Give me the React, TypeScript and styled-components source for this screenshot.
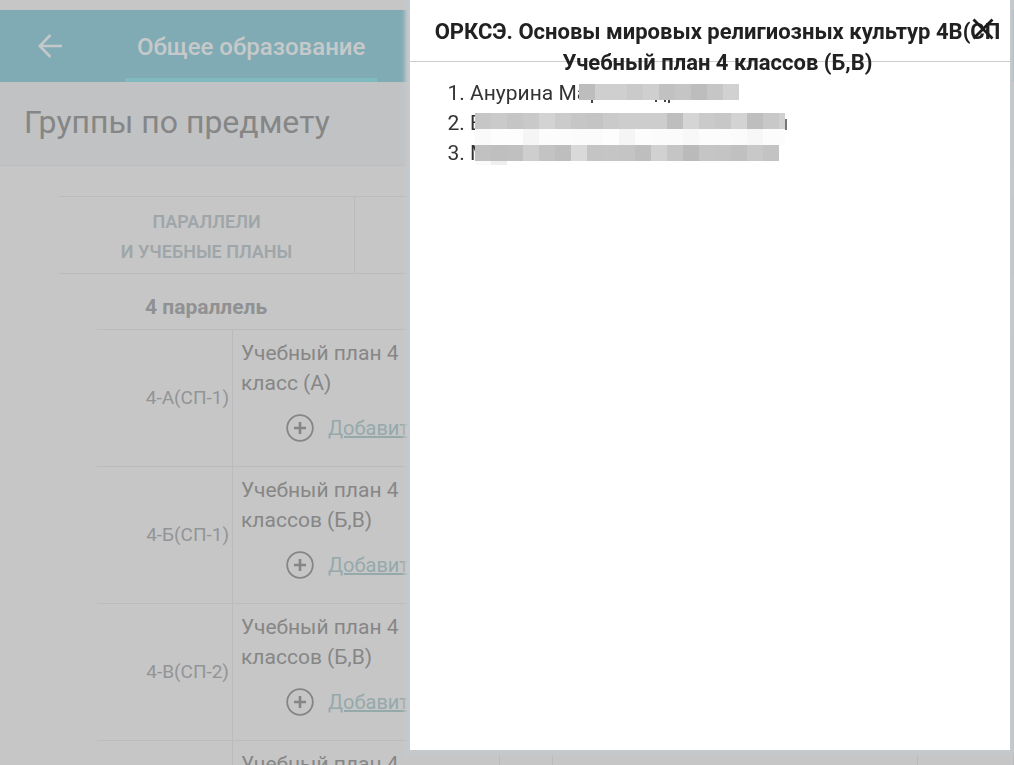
import React from 'react';
import styled, { createGlobalStyle } from 'styled-components';

const GlobalStyle = createGlobalStyle`
  * { box-sizing: border-box; }
  html { height: 100%; background: #c6c6c6; }
  body { margin: 0; height: 100%; overflow: hidden; font: 20px/30px Roboto, "Liberation Sans", sans-serif; color: #868686; }
  #root { height: 100%; overflow: hidden; }
`;

const Page = styled.div`
  padding-top: 10px;
`;

const TopBar = styled.header`
  display: flex;
  height: 72px;
  background: #80abb4;
`;

const BackButton = styled.button`
  display: flex;
  align-items: center;
  justify-content: center;
  width: 100px;
  padding: 0;
  border: 0;
  background: none;
  color: #c3c8c9;
`;

const Tab = styled.a`
  display: flex;
  align-items: center;
  margin-left: 25px;
  padding: 2px 12px 0;
  border-top: 4px solid transparent;
  border-bottom: 4px solid #80bac1;
  color: #c6c9ca;
  font-size: 24px;
  font-weight: 500;
  text-decoration: none;
`;

const Heading = styled.div`
  padding: 20px 24px 23px;
  border-bottom: 1px solid #bbbdbe;
  background: #c1c2c4;
`;

const HeadingText = styled.h1`
  margin: 0;
  color: #868686;
  font-size: 32px;
  line-height: 40px;
  font-weight: 400;
`;

const Groups = styled.table`
  width: calc(100% - 59px);
  margin: 30px 0 0 59px;
  border-collapse: separate;
  border-spacing: 0;
  table-layout: fixed;
`;

const HeadCell = styled.th`
  height: 78px;
  padding: 4px 0 0;
  border: 1px solid #babbbc;
  border-width: 1px 1px 1px 0;
  color: #9fa6a9;
  font-size: 18px;
  font-weight: 600;
  text-transform: uppercase;
`;

const GroupCell = styled.th`
  height: 55px;
  padding: 10px 0 0 48px;
  color: #8f9193;
  font-size: 21px;
  font-weight: 700;
  text-align: left;
`;

const Cell = styled.td`
  height: 137px;
  padding: 8px 3px 0 8px;
  border-top: 1px solid #babbbc;
  border-right: 1px solid #babbbc;
  vertical-align: top;
`;

const ClassCell = styled.th`
  padding: 0 3px 0 0;
  border-top: 1px solid #babbbc;
  border-right: 1px solid #babbbc;
  color: #929496;
  font-size: 19px;
  font-weight: 400;
  text-align: right;
`;

const PlanName = styled.div`
  width: 164px;
  font-size: 21px;
`;

const AddLink = styled.a`
  display: flex;
  align-items: center;
  gap: 14px;
  margin: 15px 0 0 45px;
  color: #95a9ab;
`;

const Dialog = styled.section`
  position: fixed;
  top: 0;
  right: 4px;
  bottom: 15px;
  width: 600px;
  max-width: calc(100% - 8px);
  background: #fff;
  color: #333;
  box-shadow: 0 0 4px 5px #c5c9cc;
`;

const DialogHead = styled.header`
  height: 62px;
  padding: 16px 4px 0 19px;
  border-bottom: 1px solid #ccc;
`;

const DialogTitle = styled.h2`
  margin: 0;
  color: #212121;
  font-size: 22px;
  line-height: 31px;
  font-weight: 700;
  text-align: center;
  white-space: nowrap;
`;

const CloseButton = styled.button`
  position: absolute;
  top: 18px;
  right: 16px;
  display: flex;
  padding: 0;
  border: 0;
  background: none;
  color: #1c1c1c;
`;

const Students = styled.ol`
  margin: 0;
  padding: 16px 0 0 60px;
  font-size: 21px;
`;

const Student = styled.li`
  height: 30px;
  white-space: nowrap;
`;

const HiddenName = styled.svg`
  position: absolute;
  top: 84px;
  left: 65px;
`;

const PlusIcon = () => (
  <svg width="28" height="28" viewBox="0 0 28 28" fill="none" stroke="#858585" aria-hidden="true">
    <circle cx="14" cy="14" r="12.8" strokeWidth="1.8" />
    <path d="M14 8v12M8 14h12" strokeWidth="2.6" />
  </svg>
);

const plans = [
  { name: '4-А(СП-1)', plan: 'Учебный план 4 класс (А)' },
  { name: '4-Б(СП-1)', plan: 'Учебный план 4 классов (Б,В)' },
  { name: '4-В(СП-2)', plan: 'Учебный план 4 классов (Б,В)' },
  { name: '', plan: 'Учебный план 4 классов (Б,В)' },
];

const mosaic = [
  { x: 104, y: 0, shades: 'bd cf cf ca cf c1 c5 bd c6 d1' },
  { x: 0, y: 29, shades: 'c6 ca c5 c9 d3 cb c6 c4 ca cd cd cd be d5 ca c7 d3 be c8 d0' },
  { x: 0, y: 45, shades: 'fa fd fd f5 fc fc fb fb fd f5 fc fb fb f8 fc fc fb f7 fc fc' },
  { x: 0, y: 61, shades: 'c1 bf c0 ce c3 be d9 c4 c5 c4 be d1 c5 ba c5 c4 c0 c8 c3' },
  { x: 0, y: 77, shades: 'fa ef' },
];

const MOSAIC_END = 310;

export default function App() {
  return (
    <>
      <GlobalStyle />
      <Page>
        <TopBar>
          <BackButton aria-label="Назад">
            <svg width="24" height="24" viewBox="0 0 24 24" fill="none" stroke="currentColor" strokeWidth="2.6" aria-hidden="true">
              <path d="M24 12H2M12.5 1L1.8 12l10.7 11" />
            </svg>
          </BackButton>
          <Tab href="#general">Общее образование</Tab>
        </TopBar>
        <Heading>
          <HeadingText>Группы по предмету</HeadingText>
        </Heading>
        <Groups>
          <colgroup>
            <col width="38" />
            <col width="136" />
            <col width="122" />
            <col width="145" />
            <col width="53" />
            <col width="365" />
            <col />
          </colgroup>
          <thead>
            <tr>
              <HeadCell colSpan={3}>Параллели<br />и учебные планы</HeadCell>
              <HeadCell as="td" colSpan={4} />
            </tr>
          </thead>
          <tbody>
            <tr>
              <td />
              <GroupCell colSpan={6}>4 параллель</GroupCell>
            </tr>
            {plans.map((p, i) => (
              <tr key={i}>
                <td />
                <ClassCell scope="row">{p.name}</ClassCell>
                <Cell colSpan={2}>
                  <PlanName>{p.plan}</PlanName>
                  <AddLink href="#add"><PlusIcon /><u>Добавить</u></AddLink>
                </Cell>
                <Cell />
                <Cell />
                <Cell />
              </tr>
            ))}
          </tbody>
        </Groups>
      </Page>
      <Dialog role="dialog" aria-labelledby="dialog-title">
        <DialogHead>
          <DialogTitle id="dialog-title">
            ОРКСЭ. Основы мировых религиозных культур 4В(СП<br />Учебный план 4 классов (Б,В)
          </DialogTitle>
          <CloseButton aria-label="Закрыть">
            <svg width="22" height="22" viewBox="0 0 22 22" stroke="currentColor" strokeWidth="2.8" aria-hidden="true">
              <path d="M1.5 1.5l19 19M20.5 1.5l-19 19" />
            </svg>
          </CloseButton>
        </DialogHead>
        <Students>
          <Student>Анурина Ма</Student>
          <Student>Б</Student>
          <Student>М</Student>
        </Students>
        <HiddenName width="312" height="84" aria-hidden="true" shapeRendering="crispEdges">
          {mosaic.map((row) => row.shades.split(' ').map((s, i) => (
            <rect
              key={`${row.y}-${i}`}
              x={row.x + i * 16}
              y={row.y}
              width={Math.min(16, MOSAIC_END - row.x - i * 16)}
              height={row.y === 77 ? 4 : 16}
              fill={`#${s}${s}${s}`}
            />
          )))}
          <path d="M116 16h2v3h-2zM180 16h2v2h-2zM189 16h2v2h-2zM193 16h2v3h-2z" fill="#444" />
          <path d="M310 35h2v11h-2z" fill="#777" />
        </HiddenName>
      </Dialog>
    </>
  );
}
